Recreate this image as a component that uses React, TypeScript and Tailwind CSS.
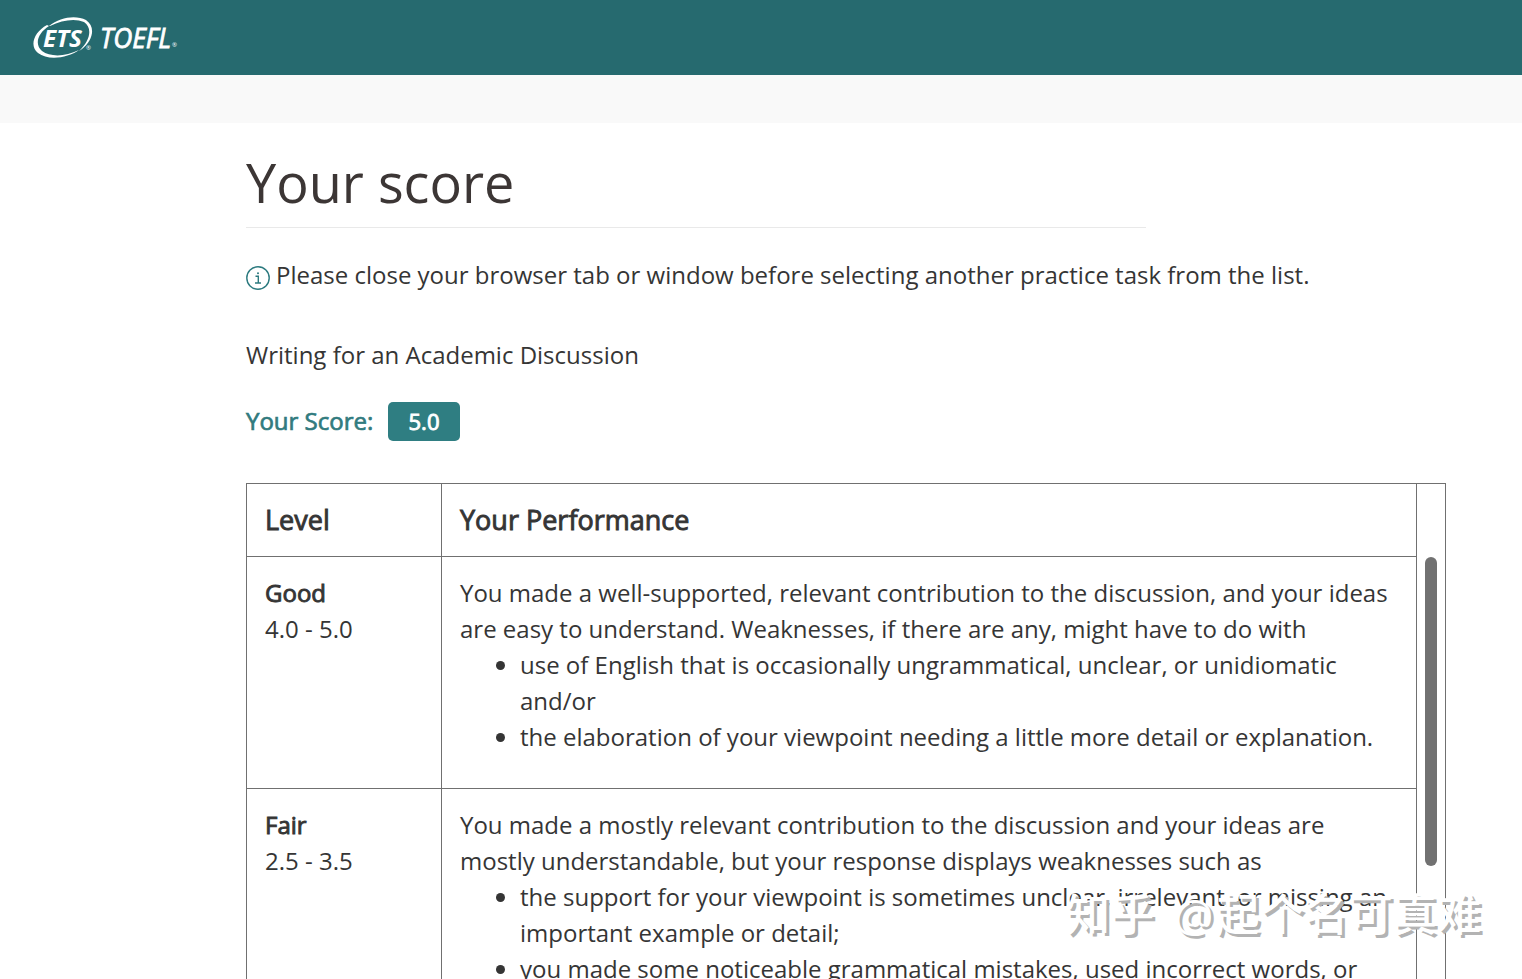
const LEVELS = [
  {
    name: "Good",
    range: "4.0 - 5.0",
    intro: [
      "You made a well-supported, relevant contribution to the discussion, and your ideas",
      "are easy to understand. Weaknesses, if there are any, might have to do with",
    ],
    points: [
      ["use of English that is occasionally ungrammatical, unclear, or unidiomatic", "and/or"],
      ["the elaboration of your viewpoint needing a little more detail or explanation."],
    ],
  },
  {
    name: "Fair",
    range: "2.5 - 3.5",
    intro: [
      "You made a mostly relevant contribution to the discussion and your ideas are",
      "mostly understandable, but your response displays weaknesses such as",
    ],
    points: [
      ["the support for your viewpoint is sometimes unclear, irrelevant, or missing an", "important example or detail;"],
      ["you made some noticeable grammatical mistakes, used incorrect words, or"],
    ],
  },
];

function Logo() {
  return (
    <svg width="150" height="46" viewBox="0 0 150 46" fill="#fff" className="font-['Open_Sans',sans-serif] italic">
      <path
        fillRule="evenodd"
        d="M19 11C30 2 46 0 56 5C66 12 63 25 52 34L49 36C60 26 63 13 54 7C45 3 32 5 20 11ZM17 10C4 17 -1 31 8 38C18 46 38 43 49 35C35 42 20 42 12 36C4 29 8 18 19 11Z"
      />
      <text x="13" y="31.500" fontSize="24" fontWeight="700" textLength="39" lengthAdjust="spacingAndGlyphs">ETS</text>
      <text x="56" y="35" fontSize="6" fontStyle="normal">®</text>
      <text x="70" y="32.500" fontSize="27" stroke="#fff" strokeWidth="0.8" textLength="71" lengthAdjust="spacingAndGlyphs">TOEFL</text>
      <text x="142" y="32" fontSize="6" fontStyle="normal">®</text>
    </svg>
  );
}

function InfoIcon() {
  return (
    <svg width="24" height="24" viewBox="0 0 24 24" fill="none" stroke="#2c7a7f" strokeWidth="1.4" className="mt-[3px]">
      <circle cx="12" cy="12" r="11.2" />
      <path d="M9.5 10.3H12.3V16.8M9 17H15" />
      <circle cx="12" cy="7.2" r="1" fill="#2c7a7f" stroke="none" />
    </svg>
  );
}

export default function App() {
  return (
    <div className="relative h-[979px] overflow-hidden bg-white font-['Open_Sans',sans-serif] text-2xl leading-9 text-[#353535]">
      <header className="flex h-[75px] items-center bg-[#266a6f] pl-[30px]">
        <Logo />
      </header>
      <div className="h-12 bg-[#f9f9f9]" />

      <main className="ml-[246px] w-[1200px]">
        <div className="h-[105px] w-[900px] border-b border-[#e9e9e9] pt-[22px]">
          <h1 className="text-[54px] leading-[74px] text-[#3c3635]">Your score</h1>
        </div>

        <div className="mt-[29px] flex gap-[6px]">
          <div className="pt-[6px]">
            <InfoIcon />
          </div>
          <p className="whitespace-nowrap">Please close your browser tab or window before selecting another practice task from the list.</p>
        </div>

        <p className="mt-[44px]">Writing for an Academic Discussion</p>

        <div className="mt-[29px] flex h-[39px]">
          <span className="w-[142px] pt-px whitespace-nowrap text-[#317b7e] [-webkit-text-stroke:0.7px_#317b7e]">Your Score:</span>
          <span className="h-[39px] w-[72px] rounded-[5px] bg-[#2f7e82] pt-px text-center text-[22px] text-white [-webkit-text-stroke:0.9px_#fff]">5.0</span>
        </div>

        <section className="mt-[42px] flex border border-[#707070]">
          <div className="w-[1169px]">
            <div className="flex h-[73px] border-b border-[#707070] text-[27px] [-webkit-text-stroke:0.9px_#353535]">
              <h2 className="w-[195px] border-r border-[#707070] pt-[18px] pl-[18px]">Level</h2>
              <h2 className="pt-[18px] pl-[18px]">Your Performance</h2>
            </div>
            {LEVELS.map((level) => (
              <div key={level.name} className="flex border-b border-[#707070]">
                <div className="w-[195px] border-r border-[#707070] pt-[18px] pl-[18px]">
                  <h3 className="[-webkit-text-stroke:0.9px_#353535]">{level.name}</h3>
                  <p>{level.range}</p>
                </div>
                <div className="pt-[18px] pb-[33px] pl-[18px] whitespace-nowrap">
                  {level.intro.map((line) => (
                    <p key={line}>{line}</p>
                  ))}
                  <ul>
                    {level.points.map((lines) => (
                      <li key={lines[0]} className="flex pl-9">
                        <span className="mt-[14px] mr-[15px] size-[9px] rounded-full bg-[#353535]" />
                        <div>
                          {lines.map((line) => (
                            <p key={line}>{line}</p>
                          ))}
                        </div>
                      </li>
                    ))}
                  </ul>
                </div>
              </div>
            ))}
          </div>
          <div className="flex-1 border-l border-[#707070] pt-[73px] pl-[8px]">
            <div className="h-[309px] w-[12px] rounded-full bg-[#717171]" />
          </div>
        </section>
      </main>

      <div className="absolute top-[880px] left-[1066px] font-['Noto_Sans_CJK_SC',sans-serif] text-[44px] leading-[64px] font-medium tracking-[0.3px] whitespace-nowrap text-white [text-shadow:3px_3px_0_#b3b3b3] [word-spacing:9px]">
        知乎 <span className="font-['Open_Sans',sans-serif] tracking-[2.5px]">@</span>起个名可真难
      </div>
    </div>
  );
}
